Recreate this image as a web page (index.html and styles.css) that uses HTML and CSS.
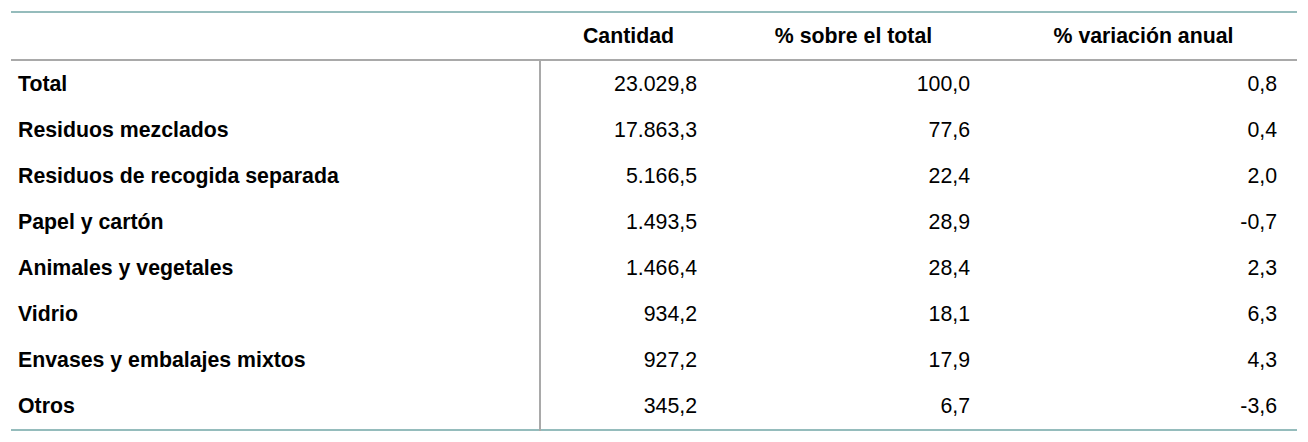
FILE: index.html
```html
<!DOCTYPE html>
<html lang="es">
<head>
<meta charset="utf-8">
<link rel="stylesheet" href="styles.css">
</head>
<body>
<table class="data">
  <colgroup>
    <col class="w0">
    <col class="w1">
    <col class="w2">
    <col class="w3">
  </colgroup>
  <thead>
    <tr>
      <th class="corner"></th>
      <th>Cantidad</th>
      <th>% sobre el total</th>
      <th>% variación anual</th>
    </tr>
  </thead>
  <tbody>
    <tr><th>Total</th><td>23.029,8</td><td>100,0</td><td>0,8</td></tr>
    <tr><th>Residuos mezclados</th><td>17.863,3</td><td>77,6</td><td>0,4</td></tr>
    <tr><th>Residuos de recogida separada</th><td>5.166,5</td><td>22,4</td><td>2,0</td></tr>
    <tr><th>Papel y cartón</th><td>1.493,5</td><td>28,9</td><td>-0,7</td></tr>
    <tr><th>Animales y vegetales</th><td>1.466,4</td><td>28,4</td><td>2,3</td></tr>
    <tr><th>Vidrio</th><td>934,2</td><td>18,1</td><td>6,3</td></tr>
    <tr><th>Envases y embalajes mixtos</th><td>927,2</td><td>17,9</td><td>4,3</td></tr>
    <tr><th>Otros</th><td>345,2</td><td>6,7</td><td>-3,6</td></tr>
  </tbody>
</table>
</body>
</html>
```

FILE: styles.css
```css
html, body {
  margin: 0;
  padding: 0;
  background: #ffffff;
}
body {
  padding: 11px 11px 0 11px;
  font-family: "Liberation Sans", Arial, Helvetica, sans-serif;
  color: #000;
}
.data {
  width: 1286px;
  table-layout: fixed;
  border-collapse: collapse;
  font-size: 21.3px;
  border-top: 2px solid #95bcbc;
  border-bottom: 2px solid #95bcbc;
}
.data .w0 { width: 529px; }
.data .w1 { width: 177px; }
.data .w2 { width: 273px; }
.data .w3 { width: 307px; }
.data th, .data td {
  height: 46px;
  padding: 0;
  vertical-align: middle;
  white-space: nowrap;
}
.data thead th {
  height: 46px;
  font-weight: bold;
  text-align: center;
  border-bottom: 2px solid #a9a9a9;
}
.data tbody th {
  text-align: left;
  font-weight: bold;
  padding-left: 7px;
  border-right: 2px solid #a9a9a9;
}
.data tbody td {
  text-align: right;
  padding-right: 20px;
}
```
